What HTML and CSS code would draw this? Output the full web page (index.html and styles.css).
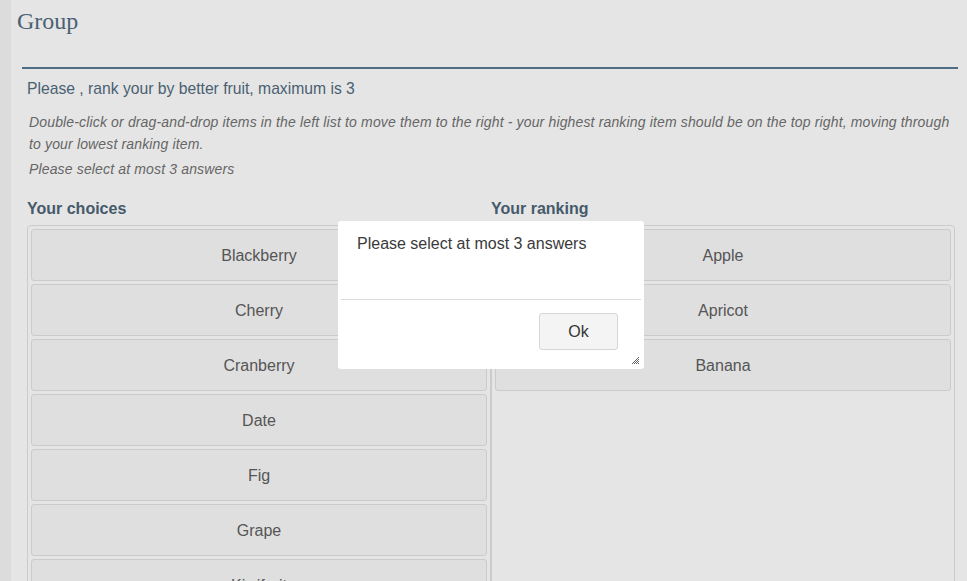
FILE: index.html
```html
<!DOCTYPE html>
<html lang="en">
<head>
<meta charset="utf-8">
<title>Group</title>
<link rel="stylesheet" href="styles.css">
</head>
<body>
<div class="page">
  <h1 class="group-title">Group</h1>
  <div class="question">
    <div class="q-text">Please , rank your by better fruit, maximum is 3</div>
    <div class="help">
      <p class="help-line">Double-click or drag-and-drop items in the left list to move them to the right - your highest ranking item should be on the top right, moving through to your lowest ranking item.</p>
      <p class="help-line help-tip">Please select at most 3 answers</p>
    </div>
    <div class="ranking">
      <div class="rank-col">
        <div class="col-label">Your choices</div>
        <ul class="rank-list">
          <li class="rank-item">Blackberry</li>
          <li class="rank-item">Cherry</li>
          <li class="rank-item">Cranberry</li>
          <li class="rank-item">Date</li>
          <li class="rank-item">Fig</li>
          <li class="rank-item">Grape</li>
          <li class="rank-item">Kiwifruit</li>
          <li class="rank-item">Lemon</li>
        </ul>
      </div>
      <div class="rank-col">
        <div class="col-label">Your ranking</div>
        <ul class="rank-list">
          <li class="rank-item">Apple</li>
          <li class="rank-item">Apricot</li>
          <li class="rank-item">Banana</li>
        </ul>
      </div>
    </div>
  </div>
  <div class="dialog">
    <div class="dialog-body">Please select at most 3 answers</div>
    <div class="dialog-foot">
      <button class="dialog-btn" type="button">Ok</button>
    </div>
    <svg class="resize-grip" width="8" height="8" viewBox="0 0 8 8">
      <path d="M1 8 L8 1 M3 8 L8 3 M5 8 L8 5 M7 8 L8 7" stroke="#555" stroke-width="0.9" fill="none"/>
    </svg>
  </div>
</div>
</body>
</html>
```

FILE: styles.css
```css
html, body {
  margin: 0;
  padding: 0;
}

body {
  background: #e5e5e5;
  font-family: "Liberation Sans", Arial, sans-serif;
  font-size: 16px;
  color: #333;
}

.page {
  min-height: 581px;
  border-left: 11px solid #dcdcdc;
  position: relative;
}

.group-title {
  margin: 0;
  padding: 6px 0 0 6px;
  font-family: "Liberation Serif", "Times New Roman", serif;
  font-weight: normal;
  font-size: 24px;
  line-height: 30px;
  color: #4a6073;
}

.question {
  margin: 31px 9px 0 11px;
  border-top: 2px solid #4f6e86;
  padding: 0 3px 0 5px;
}

.q-text {
  padding-top: 10px;
  line-height: 20px;
  font-size: 15.7px;
  color: #4a5f71;
}

.help {
  margin-top: 12px;
  padding-left: 2px;
  font-size: 14px;
  letter-spacing: 0.15px;
  font-style: italic;
  color: #666;
}

.help-line {
  margin: 0;
  line-height: 22px;
}

.help-tip {
  margin-top: 3px;
}

.ranking {
  display: grid;
  grid-template-columns: 464px 464px;
  margin-top: 19px;
}

.rank-col {
  display: flex;
  flex-direction: column;
}

.col-label {
  font-weight: bold;
  line-height: 20px;
  color: #455a6b;
  margin-bottom: 6px;
}

.rank-list {
  flex: 1;
  list-style: none;
  margin: 0;
  padding: 3px;
  border: 1px solid #cbcbcb;
  border-radius: 4px;
}

.rank-item {
  padding: 16px 0 14px;
  line-height: 20px;
  text-align: center;
  color: #555;
  background: #dfdfdf;
  border: 1px solid #cbcbcb;
  border-radius: 3px;
  margin-bottom: 3px;
}

.dialog {
  position: absolute;
  left: 327px;
  top: 221px;
  width: 306px;
  height: 148px;
  box-sizing: border-box;
  padding: 3px;
  background: #fff;
  border-radius: 3px;
}

.dialog-body {
  height: 76px;
  box-sizing: border-box;
  padding: 10px 16px;
  line-height: 20px;
  color: #3a3a3a;
  border-bottom: 1px solid #dcdcdc;
}

.dialog-foot {
  display: flex;
  justify-content: flex-end;
  padding: 13px 23px 0 0;
}

.dialog-btn {
  width: 79px;
  height: 37px;
  background: #f4f4f4;
  border: 1px solid #d6d6d6;
  border-radius: 3px;
  font-family: "Liberation Sans", Arial, sans-serif;
  font-size: 16px;
  color: #333;
  padding: 0;
}

.resize-grip {
  position: absolute;
  right: 5px;
  bottom: 5px;
}
```
